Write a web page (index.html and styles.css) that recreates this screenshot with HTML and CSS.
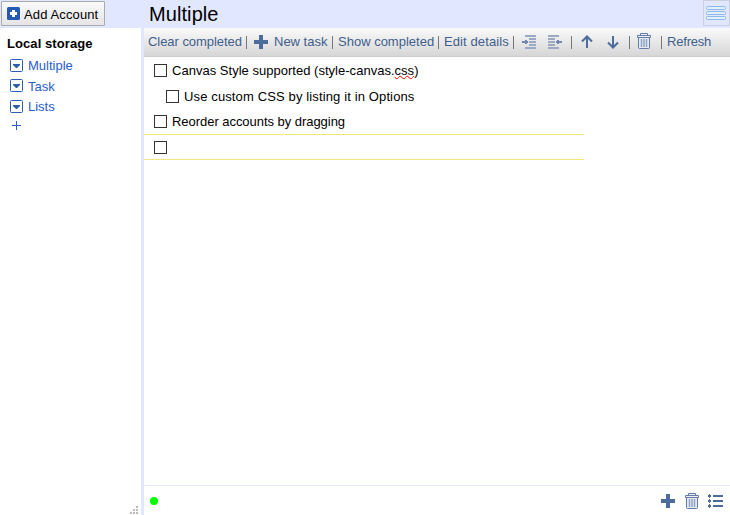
FILE: index.html
```html
<!DOCTYPE html>
<html lang="en">
<head>
<meta charset="utf-8">
<title>Multiple</title>
<link rel="stylesheet" href="styles.css">
</head>
<body>
<svg class="defs" width="0" height="0">
  <symbol id="plus" viewBox="0 0 14 14"><path d="M5 0h4v5h5v4H9v5H5V9H0V5h5z" fill="#4c6c9c"/></symbol>
  <symbol id="trash" viewBox="0 0 14 16"><path d="M3.500 2V.5h7V2M.5 4.500v-2h13v2z" fill="#edf0f5" stroke="#627ba7"/><path d="M1.500 5v9.500q0 1 1 1h9q1 0 1-1V5" fill="#e4e8ef" stroke="#627ba7"/><path d="M4.500 6v8M7 6v8M9.500 6v8" stroke="#8fa2c3" stroke-width="1.400"/></symbol>
  <symbol id="drop" viewBox="0 0 13 13"><rect x=".5" y=".5" width="12" height="12" rx="1" fill="#fff" stroke="#2a5db0"/><path d="M3 5h7v1L7 9H6L3 6z" fill="#2a5db0"/></symbol>
</svg>
<header class="header">
  <div class="account"><button class="add"><svg width="13" height="13"><rect width="13" height="13" rx="1.5" fill="#2459b4"/><path d="M5 3h3v2h2v3H8v2H5V8H3V5h2z" fill="#fff"/></svg><span>Add Account</span></button></div>
  <h1>Multiple</h1>
  <div class="menu"><svg width="20" height="14"><g fill="#e0f0ff" stroke="#8cb8ea"><rect x=".5" y=".5" width="19" height="3" rx="1"/><rect x=".5" y="5.5" width="19" height="3" rx="1"/><rect x=".5" y="10.5" width="19" height="3" rx="1"/></g></svg></div>
</header>
<div class="body">
  <aside class="sidebar">
    <h2>Local storage</h2>
    <div class="list"><svg width="13" height="13"><use href="#drop"/></svg><a>Multiple</a></div>
    <div class="list second"><svg width="13" height="13"><use href="#drop"/></svg><a>Task</a></div>
    <div class="list third-list"><svg width="13" height="13"><use href="#drop"/></svg><a>Lists</a></div>
    <svg class="new-list" width="9" height="9"><path d="M4.500 0v9M0 4.500h9" stroke="#2a5dc8"/></svg>
    <svg class="grip" width="8" height="8" fill="#bbb"><path d="M6 0h2v2H6zM3 3h2v2H3zM6 3h2v2H6zM0 6h2v2H0zM3 6h2v2H3zM6 6h2v2H6z"/></svg>
  </aside>
  <main class="main">
    <nav class="toolbar">
      <div class="tool clear"><span>Clear completed</span></div>
      <div class="tool new"><svg width="14" height="14"><use href="#plus"/></svg><span>New task</span></div>
      <div class="tool show"><span>Show completed</span></div>
      <div class="tool edit"><span>Edit details</span></div>
      <div class="tool indent">
        <svg width="14" height="14"><path d="M3 1h11M7 4h7M7 7h7M7 10h7M3 13h11" stroke="#9ca9c3" stroke-width="2"/><path d="M0 6h3V5h2v1h1v2H5v1H3V8H0z" fill="#7187b0"/></svg>
        <svg width="14" height="14"><path d="M0 1h11M0 4h7M0 7h7M0 10h7M0 13h11" stroke="#9ca9c3" stroke-width="2"/><path d="M14 6h-3V5H9v1H8v2h1v1h2V8h3z" fill="#7187b0"/></svg>
      </div>
      <div class="tool move">
        <svg width="12" height="14"><path d="M6 13V2M1 6.500L6 1.500l5 5" fill="none" stroke="#4c6c9c" stroke-width="2"/></svg>
        <svg width="12" height="14"><path d="M6 1v11M1 7.500L6 12.500l5-5" fill="none" stroke="#4c6c9c" stroke-width="2"/></svg>
      </div>
      <div class="tool delete"><svg width="14" height="16"><use href="#trash"/></svg></div>
      <div class="tool refresh"><span>Refresh</span></div>
    </nav>
    <section class="tasks">
      <div class="task first"><i class="box"></i><span>Canvas Style supported (style-canvas.<span class="typo">css</span>)</span></div>
      <div class="task child"><i class="box"></i><span>Use custom CSS by listing it in Options</span></div>
      <div class="task third"><i class="box"></i><span>Reorder accounts by dragging</span></div>
      <div class="task active"><i class="box"></i></div>
    </section>
    <footer class="footer">
      <i class="status"></i>
      <svg class="f-plus" width="14" height="14"><use href="#plus"/></svg>
      <svg class="f-trash" width="14" height="16"><use href="#trash"/></svg>
      <svg width="15" height="14" fill="#4c6c9c"><path d="M5 1h10v2H5zM5 6h10v2H5zM5 11h10v2H5zM1 0h1v1h1v2H2v1H1V3H0V1h1zM1 5h1v1h1v2H2v1H1V8H0V6h1zM1 10h1v1h1v2H2v1H1v-1H0v-2h1z"/></svg>
    </footer>
  </main>
</div>
</body>
</html>
```
FILE: styles.css
```css
* { box-sizing: border-box; }
body { margin: 0; height: 515px; overflow: hidden; background: #fff; color: #000; font: 13px/16px "Liberation Sans", Arial, sans-serif; display: flex; flex-direction: column; }
svg { display: block; flex: none; }
.defs { position: absolute; }
h1, h2 { margin: 0; }
.header { height: 28px; flex: none; display: flex; background: #e1e7ff; }
.account { width: 149px; padding: 1px; }
.add { display: flex; align-items: center; width: 104px; height: 25px; padding: 0 0 0 5px; gap: 4px; border: 1px solid #aaa; border-radius: 1px; background: linear-gradient(#fafafa, #e5e5e5); color: #000; font: inherit; white-space: nowrap; }
.add span { letter-spacing: .12px; padding-top: 2px; }
h1 { font-size: 20px; line-height: 28px; font-weight: 400; flex: 1; letter-spacing: .08px; }
.menu { width: 27px; height: 26px; border: 1px solid #ccd0dc; padding: 5px 2px; }
.body { flex: 1; display: flex; min-height: 0; }
.sidebar { width: 144px; flex: none; border-right: 3px solid #e1e7ff; padding: 8px 3px 0 7px; display: flex; flex-direction: column; }
h2 { font-size: 13px; line-height: 16px; margin-bottom: 4px; letter-spacing: .08px; }
.list { height: 20px; padding-left: 3px; display: flex; gap: 5px; align-items: center; color: #2a5dd0; }
.list.second a { padding-top: 2px; }
.list.third-list { height: 21px; }
.list svg { margin-bottom: 1px; }
.new-list { margin: 4px 0 0 5px; }
.grip { margin: auto 0 1px auto; }
.main { flex: 1; display: flex; flex-direction: column; min-width: 0; }
.toolbar { height: 29px; flex: none; display: flex; padding-left: 4px; background: linear-gradient(#fafafa, #d6d6d6); border-bottom: 1px solid #ccc; color: #3f5f8c; white-space: nowrap; }
.tool { height: 28px; display: flex; align-items: center; background: linear-gradient(#777, #777) right 8px / 1px 13px no-repeat; }
.clear { width: 99px; letter-spacing: -.05px; }
.new { width: 86px; padding-left: 7px; gap: 6px; }
.show { width: 106px; padding-left: 5px; }
.edit { width: 75px; padding-left: 5px; letter-spacing: .1px; }
.indent { width: 58px; padding-left: 8px; gap: 12px; }
.move { width: 58px; padding-left: 9px; gap: 14px; }
.delete { width: 32px; padding-left: 7px; }
.delete svg { margin-top: -2px; }
.refresh { padding-left: 5px; background: none; letter-spacing: -.2px; }
.tasks { flex: 1; padding-top: 1px; width: 440px; }
.task { height: 25px; padding-left: 10px; display: flex; align-items: center; gap: 5px; white-space: nowrap; }
.task.first { letter-spacing: .02px; }
.task.child { padding-left: 22px; height: 26px; letter-spacing: .13px; }
.task.child > span { padding-top: 1px; }
.task.third { letter-spacing: -.04px; }
.task.third > span { padding-top: 1px; }
.task.active { height: 26px; padding-top: 1px; border-top: 1px solid #f5e67c; border-bottom: 1px solid #f5e67c; }
.box { width: 13px; height: 13px; border: 1px solid #333; }
.task.child .box { margin-top: 1px; }
.typo { text-decoration: underline wavy red 1px; text-decoration-skip-ink: none; text-underline-offset: 0; }
.footer { height: 30px; flex: none; border-top: 1px solid #e1e7ff; display: flex; align-items: center; padding: 1px 7px 0 6px; }
.status { width: 8px; height: 8px; border-radius: 50%; background: #0f0; margin-right: auto; }
.f-plus { margin-right: 10px; }
.f-trash { margin-right: 9px; }
```
